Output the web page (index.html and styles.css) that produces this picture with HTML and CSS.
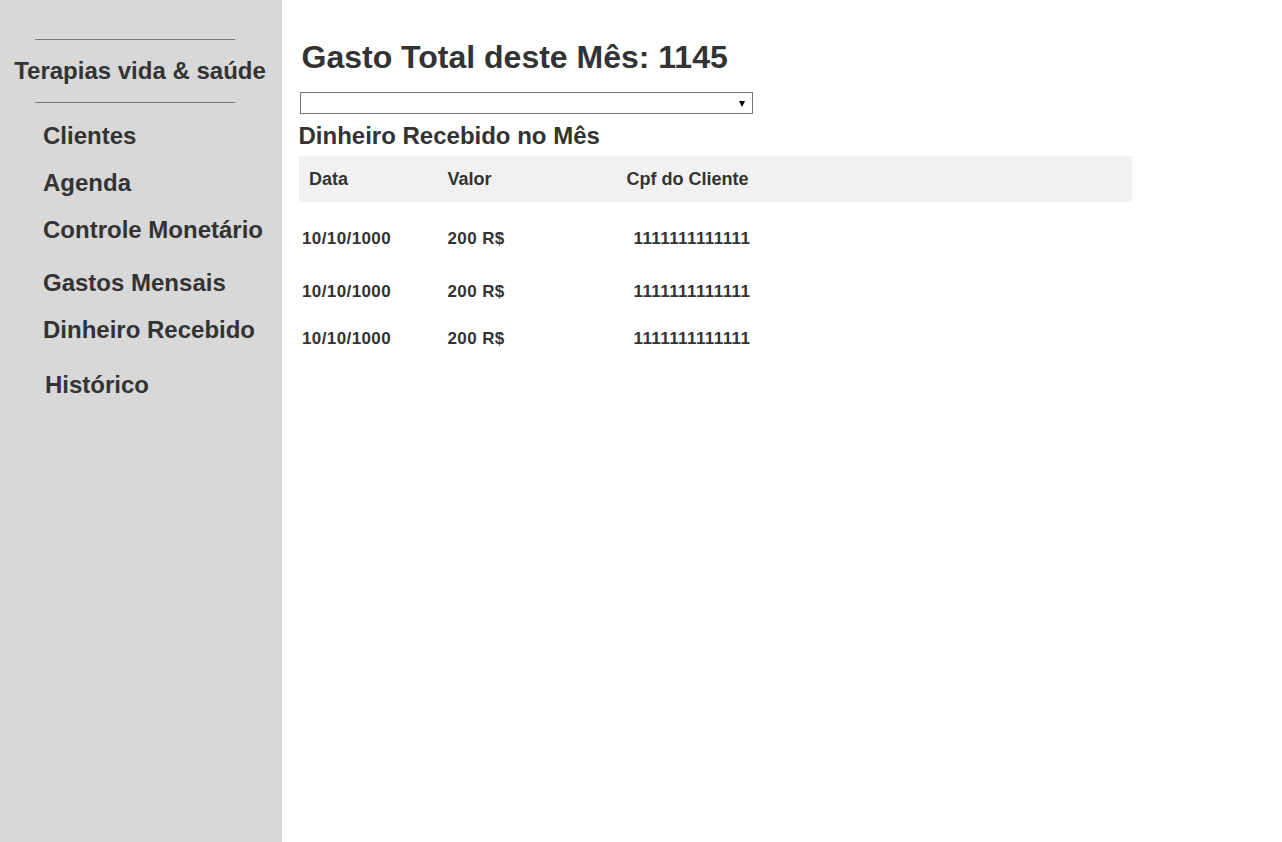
FILE: index.html
```html
<!DOCTYPE html>
<html lang="pt-BR">
<head>
<meta charset="utf-8">
<title>Dinheiro Recebido</title>
<link rel="stylesheet" href="styles.css">
</head>
<body>
<div class="app">
  <aside class="sidebar">
    <hr class="rule rule-top">
    <div class="brand">Terapias vida &amp; saúde</div>
    <hr class="rule rule-bottom">
    <nav class="nav">
      <a class="nav-item" href="#">Clientes</a>
      <a class="nav-item" href="#">Agenda</a>
      <a class="nav-item" href="#">Controle Monetário</a>
      <a class="nav-item nav-gap" href="#">Gastos Mensais</a>
      <a class="nav-item" href="#">Dinheiro Recebido</a>
      <a class="nav-item nav-gap-lg nav-indent" href="#">Histórico</a>
    </nav>
  </aside>
  <main class="main">
    <h1 class="title">Gasto Total deste Mês: 1145</h1>
    <div class="select-wrap">
      <select class="month-select"><option></option></select>
    </div>
    <h2 class="subtitle">Dinheiro Recebido no Mês</h2>
    <table class="table">
      <colgroup>
        <col class="c-date">
        <col class="c-value">
        <col class="c-cpf">
      </colgroup>
      <thead>
        <tr><th>Data</th><th>Valor</th><th>Cpf do Cliente</th></tr>
      </thead>
      <tbody>
        <tr class="row-first"><td>10/10/1000</td><td>200 R$</td><td>1111111111111</td></tr>
        <tr><td>10/10/1000</td><td>200 R$</td><td>1111111111111</td></tr>
        <tr><td>10/10/1000</td><td>200 R$</td><td>1111111111111</td></tr>
      </tbody>
    </table>
  </main>
</div>
</body>
</html>
```
FILE: styles.css
```css
html, body {
  margin: 0;
  padding: 0;
  height: 100%;
}
body {
  font-family: "Liberation Sans", Arial, sans-serif;
  color: #333;
  background: #fff;
}
.app {
  display: flex;
  min-height: 842px;
}
.sidebar {
  width: 282px;
  flex: 0 0 282px;
  background: #d8d8d8;
  display: flex;
  flex-direction: column;
}
.rule {
  border: 0;
  border-top: 1px solid #777;
  width: 200px;
  margin: 0 0 0 35px;
  height: 0;
}
.rule-top {
  margin-top: 39px;
}
.brand {
  margin-top: 17px;
  text-align: center;
  font-size: 24px;
  font-weight: bold;
  line-height: 27px;
  padding-right: 2px;
}
.rule-bottom {
  margin-top: 18px;
}
.nav {
  display: flex;
  flex-direction: column;
  gap: 20px;
  margin-top: 19px;
  padding-left: 43px;
}
.nav-item {
  font-size: 24px;
  font-weight: bold;
  line-height: 27px;
  color: #333;
  text-decoration: none;
}
.nav-gap {
  margin-top: 6px;
}
.nav-gap-lg {
  margin-top: 8px;
}
.nav-indent {
  margin-left: 2px;
}
.main {
  flex: 1;
  padding-left: 17px;
}
.title {
  font-size: 32px;
  font-weight: bold;
  line-height: 36px;
  margin: 39px 0 0 2.5px;
}
.select-wrap {
  position: relative;
  width: 453px;
  margin: 17px 0 0 1px;
}
.month-select {
  appearance: none;
  -webkit-appearance: none;
  display: block;
  width: 453px;
  height: 22px;
  border: 1px solid #767676;
  border-radius: 0;
  background: #fff;
  margin: 0;
  padding: 0 4px;
  font-family: "Liberation Sans", Arial, sans-serif;
  font-size: 13px;
}
.select-wrap::after {
  content: "";
  position: absolute;
  right: 8px;
  top: 9px;
  border-left: 3px solid transparent;
  border-right: 3px solid transparent;
  border-top: 6px solid #000;
  pointer-events: none;
}
.subtitle {
  font-size: 24px;
  font-weight: bold;
  line-height: 27px;
  margin: 8px 0 0 -0.5px;
}
.table {
  margin-top: 7px;
  width: 833px;
  border-collapse: collapse;
  table-layout: fixed;
}
.c-date { width: 148.5px; }
.c-value { width: 178px; }
.table th {
  background: #f1f1f1;
  text-align: left;
  font-size: 18px;
  font-weight: bold;
  height: 46px;
  padding: 0;
  line-height: 20px;
  vertical-align: middle;
}
.table th:first-child {
  padding-left: 10px;
}
.table th:last-child {
  padding-left: 1px;
}
.table td {
  font-size: 17px;
  font-weight: bold;
  line-height: 20px;
  letter-spacing: 0.4px;
  padding: 10px 0 17px 0;
}
.table td:first-child {
  padding-left: 3px;
}
.table td:last-child {
  padding-left: 8px;
}
.table .row-first td {
  padding-top: 27px;
  padding-bottom: 23px;
}
```
